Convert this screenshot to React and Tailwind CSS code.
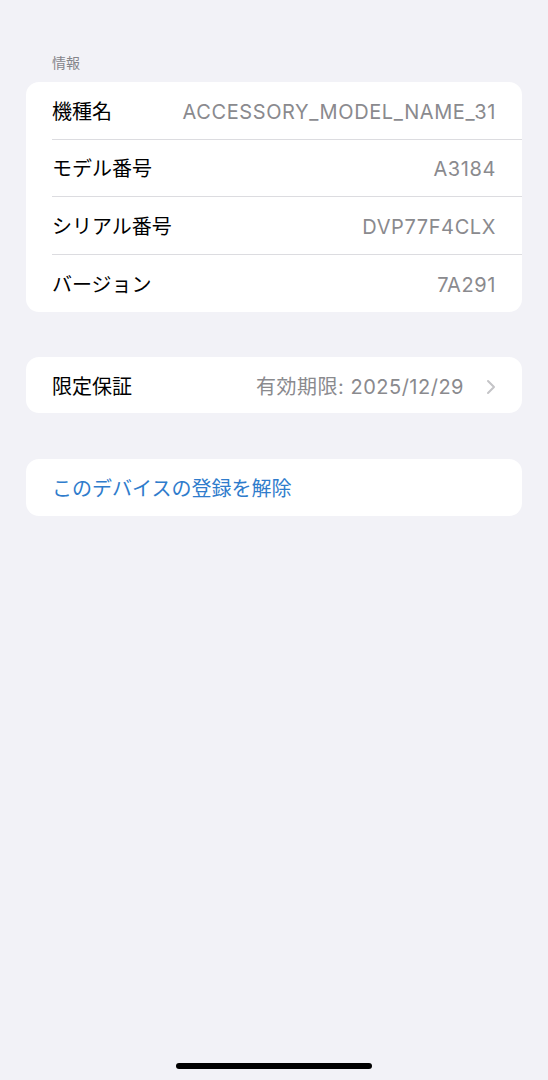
import React from "react";

const infoRows = [
  { label: "機種名", value: "ACCESSORY_MODEL_NAME_31" },
  { label: "モデル番号", value: "A3184" },
  { label: "シリアル番号", value: "DVP77F4CLX" },
  { label: "バージョン", value: "7A291" },
];

const Chevron = () => (
  <svg width="10" height="16" viewBox="0 0 10 16" fill="none">
    <path
      d="M2 2l6 6-6 6"
      stroke="#c4c4c7"
      strokeWidth="2"
      strokeLinecap="round"
      strokeLinejoin="round"
    />
  </svg>
);

export default function App() {
  return (
    <div
      className="min-h-screen bg-[#f2f2f7] flex flex-col"
      style={{ fontFamily: 'Inter, "Noto Sans CJK JP", sans-serif' }}
    >
      <div className="px-[26px] pt-[53px] flex flex-col">
        <p className="pl-[26px] text-[14px] leading-[20px] text-[#85858a] mb-[9px]">
          情報
        </p>

        <div className="bg-white rounded-[13px] overflow-hidden">
          {infoRows.map((row, i) => (
            <div key={row.label} className="pl-[26px]">
              <div
                className={
                  "h-[57.5px] pt-[3px] flex items-center justify-between pr-[26px] " +
                  (i < infoRows.length - 1 ? "border-b border-[#dcdce0]" : "")
                }
              >
                <span className="text-[20px] text-black">{row.label}</span>
                <span className="text-[20px] tracking-[0.6px] text-[#8a8a8e]">
                  {row.value}
                </span>
              </div>
            </div>
          ))}
        </div>

        <div className="mt-[45px] bg-white rounded-[13px] h-[56px] pt-[3px] flex items-center justify-between pl-[26px] pr-[26px]">
          <span className="text-[20px] text-black">限定保証</span>
          <div className="flex items-center gap-[22px]">
            <span className="text-[20px] tracking-[0.5px] text-[#8a8a8e]">
              有効期限: 2025/12/29
            </span>
            <Chevron />
          </div>
        </div>

        <div className="mt-[46px] bg-white rounded-[13px] h-[57px] pt-[3px] flex items-center pl-[26px]">
          <span className="text-[20px] text-[#2f7ccc]">このデバイスの登録を解除</span>
        </div>
      </div>

      <div className="mt-auto flex justify-center pb-[11px]">
        <div className="w-[196px] h-[6px] rounded-full bg-black" />
      </div>
    </div>
  );
}
